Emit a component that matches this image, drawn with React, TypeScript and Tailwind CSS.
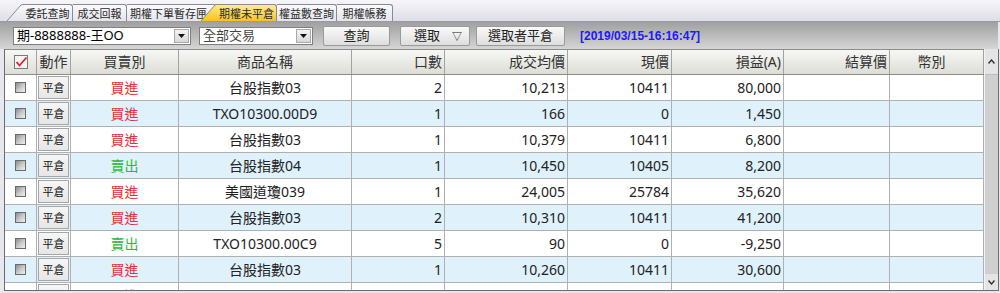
import React from "react";

const FONT = '"Noto Sans", "Noto Sans CJK TC", sans-serif';

type Row = { side: "買進" | "賣出"; name: string; qty: string; avg: string; cur: string; pl: string };

const rows: Row[] = [
  { side: "買進", name: "台股指數03", qty: "2", avg: "10,213", cur: "10411", pl: "80,000" },
  { side: "買進", name: "TXO10300.00D9", qty: "1", avg: "166", cur: "0", pl: "1,450" },
  { side: "買進", name: "台股指數03", qty: "1", avg: "10,379", cur: "10411", pl: "6,800" },
  { side: "賣出", name: "台股指數04", qty: "1", avg: "10,450", cur: "10405", pl: "8,200" },
  { side: "買進", name: "美國道瓊039", qty: "1", avg: "24,005", cur: "25784", pl: "35,620" },
  { side: "買進", name: "台股指數03", qty: "2", avg: "10,310", cur: "10411", pl: "41,200" },
  { side: "賣出", name: "TXO10300.00C9", qty: "5", avg: "90", cur: "0", pl: "-9,250" },
  { side: "買進", name: "台股指數03", qty: "1", avg: "10,260", cur: "10411", pl: "30,600" },
  { side: "買進", name: "TXO10300.00C8", qty: "1", avg: "385", cur: "0", pl: "4,750" },
];

const COLS = "grid-cols-[32px_34px_108px_173px_93px_123px_104px_112px_106px_94px]";

function Slant({ from, to, id }: { from: string; to: string; id: string }) {
  return (
    <svg width="16" height="17" viewBox="0 0 16 17" className="block shrink-0">
      <defs>
        <linearGradient id={id} x1="0" y1="0" x2="0" y2="1">
          <stop offset="0" stopColor={from} />
          <stop offset="1" stopColor={to} />
        </linearGradient>
      </defs>
      <polygon points="0,17 14,1 16,0 16,17" fill={`url(#${id})`} />
      <polyline points="0,17 14,1 16,0.5" fill="none" stroke="#8a8a94" strokeWidth="1" />
    </svg>
  );
}

function Tab({ label, w, active, extra }: { label: string; w: string; active?: boolean; extra?: string }) {
  return (
    <div
      className={`${w} ${extra ?? "justify-center"} h-[17px] shrink-0 flex items-center border-r border-t border-[#8a8a94] rounded-tr-[3px] text-[11px] leading-none text-[#2a2a2a] overflow-hidden whitespace-nowrap ${
        active ? "bg-gradient-to-b from-[#ffec8a] to-[#f4c21c]" : "bg-gradient-to-b from-[#fbfbfd] to-[#e4e4ea]"
      }`}
    >
      {label}
    </div>
  );
}

function SelectBox({ w, text, color }: { w: string; text: string; color: string }) {
  return (
    <div className={`${w} h-[18px] bg-white border border-[#7f7f7f] flex items-center`}>
      <span className={`flex-1 pl-[3px] text-[13px] leading-none ${color}`}>{text}</span>
      <div className="w-[15px] h-[14px] mr-[1px] border border-[#a9a9a9] bg-gradient-to-b from-[#f4f4f4] to-[#d8d8d8] flex items-center justify-center">
        <svg width="7" height="4" viewBox="0 0 7 4">
          <polygon points="0,0 7,0 3.5,4" fill="#111" />
        </svg>
      </div>
    </div>
  );
}

function Btn({ w, children }: { w: string; children: React.ReactNode }) {
  return (
    <div
      className={`${w} h-[20px] border border-[#9a9a9a] rounded-[2px] bg-gradient-to-b from-[#fafafa] to-[#dedede] flex items-center justify-center text-[13px] leading-none text-[#222]`}
    >
      {children}
    </div>
  );
}

function RowCheck() {
  return (
    <div className="w-[11px] h-[11px] border border-[#6a6a6a] bg-gradient-to-br from-[#8c8c8c] via-[#c8c8c8] to-[#f0f0f0]" />
  );
}

function HeaderCheck() {
  return (
    <svg width="14" height="14" viewBox="0 0 14 14">
      <rect x="0.5" y="0.5" width="13" height="13" fill="#f4f4f4" stroke="#7a7a7a" />
      <polyline points="2.5,7 5.5,10.5 12.5,2.5" fill="none" stroke="#e0202a" strokeWidth="1.8" />
    </svg>
  );
}

export default function App() {
  const hdr =
    "h-full flex items-center border-r border-[#a2a2a2] text-[14px] leading-none text-[#333] bg-gradient-to-b from-[#f7f7f4] to-[#dedeD8]";
  const cell = "h-full flex items-center border-r border-b border-[#b0b0b0] text-[14px] leading-none";
  return (
    <div
      className="w-[1000px] h-[293px] overflow-hidden flex flex-col bg-[#e6e8ee]"
      style={{ fontFamily: FONT }}
    >
      {/* tabs */}
      <div className="h-[22px] shrink-0 flex items-end pl-[7px] border-b border-[#9a9aa4] bg-gradient-to-b from-[#f6f6fa] to-[#dedee6]">
        <Slant from="#fbfbfd" to="#e4e4ea" id="s1" />
        <Tab label="委託查詢" w="w-[50px]" />
        <Tab label="成交回報" w="w-[54px]" />
        <Tab label="期權下單暫存匣" w="w-[90px]" extra="justify-start pl-[3px]" />
        <div className="-ml-[16px] flex items-end">
          <Slant from="#ffec8a" to="#f4c21c" id="s2" />
        </div>
        <Tab label="期權未平倉" w="w-[60px]" active />
        <Tab label="權益數查詢" w="w-[60px]" />
        <Tab label="期權帳務" w="w-[56px]" />
      </div>

      {/* toolbar */}
      <div className="h-[27px] shrink-0 flex items-center pl-[13px] mr-[2px] bg-gradient-to-b from-[#a0a0a0] to-[#d6d6d6]">
        <SelectBox w="w-[178px]" text="期-8888888-王OO" color="text-black" />
        <div className="w-[8px]" />
        <SelectBox w="w-[114px]" text="全部交易" color="text-[#444]" />
        <div className="w-[10px]" />
        <Btn w="w-[67px]">查詢</Btn>
        <div className="w-[10px]" />
        <Btn w="w-[70px]">
          <span className="ml-[6px]">選取</span>
          <span className="ml-[12px] text-[10px]">▽</span>
        </Btn>
        <div className="w-[6px]" />
        <Btn w="w-[89px]">選取者平倉</Btn>
        <span
          className="ml-[15px] text-[12px] font-bold text-[#1a1aff] leading-none"
          style={{ fontFamily: '"Liberation Sans", sans-serif' }}
        >
          [2019/03/15-16:16:47]
        </span>
      </div>

      {/* grid */}
      <div className="h-[242px] shrink-0 ml-[4px] mr-[1px] flex border-l border-b border-r border-[#6c6c6c] bg-white">
        <div className="w-[979px] flex flex-col overflow-hidden">
          <div className={`grid ${COLS} h-[26px] shrink-0 border-t border-b border-[#8c8c8c]`}>
            <div className={`${hdr} justify-center`}>
              <HeaderCheck />
            </div>
            <div className={`${hdr} justify-center`}>動作</div>
            <div className={`${hdr} justify-center`}>買賣別</div>
            <div className={`${hdr} justify-center`}>商品名稱</div>
            <div className={`${hdr} justify-end pr-[2px]`}>口數</div>
            <div className={`${hdr} justify-end pr-[2px]`}>成交均價</div>
            <div className={`${hdr} justify-end pr-[2px]`}>現價</div>
            <div className={`${hdr} justify-end pr-[2px]`}>損益(A)</div>
            <div className={`${hdr} justify-end pr-[2px]`}>結算價</div>
            <div className={`${hdr} justify-center pr-[10px]`}>幣別</div>
          </div>
          {rows.map((r, i) => (
            <div
              key={i}
              className={`grid ${COLS} h-[26px] shrink-0 ${i % 2 === 1 ? "bg-[#dff1fb]" : "bg-white"} text-[#222]`}
            >
              <div className={`${cell} justify-center`}>
                <RowCheck />
              </div>
              <div className={`${cell} p-[1px]`}>
                <div className="w-full h-full border border-[#a6a6a6] bg-gradient-to-b from-[#f6f6f6] to-[#e6e6e6] flex items-center justify-center text-[11px] text-[#111]">
                  平倉
                </div>
              </div>
              <div
                className={`${cell} justify-center ${r.side === "買進" ? "text-[#e8303a]" : "text-[#2dbb3a]"}`}
              >
                {r.side}
              </div>
              <div className={`${cell} justify-center`}>{r.name}</div>
              <div className={`${cell} justify-end pr-[2px]`}>{r.qty}</div>
              <div className={`${cell} justify-end pr-[2px]`}>{r.avg}</div>
              <div className={`${cell} justify-end pr-[2px]`}>{r.cur}</div>
              <div className={`${cell} justify-end pr-[2px]`}>{r.pl}</div>
              <div className={`${cell}`} />
              <div className={`${cell}`} />
            </div>
          ))}
        </div>
        {/* scrollbar */}
        <div className="flex-1 flex flex-col bg-[#cfcfcf] border-l border-[#f4f4f4]">
          <div className="h-[26px] flex items-center justify-center bg-[#e4e4e4] border-b border-[#bdbdbd]">
            <svg width="7" height="5" viewBox="0 0 7 5">
              <polyline points="0.5,4.5 3.5,1 6.5,4.5" fill="none" stroke="#333" strokeWidth="1.4" />
            </svg>
          </div>
          <div className="flex-1" />
          <div className="h-[16px] flex items-center justify-center bg-[#e4e4e4]">
            <svg width="7" height="5" viewBox="0 0 7 5">
              <polyline points="0.5,0.5 3.5,4 6.5,0.5" fill="none" stroke="#333" strokeWidth="1.4" />
            </svg>
          </div>
        </div>
      </div>
    </div>
  );
}
